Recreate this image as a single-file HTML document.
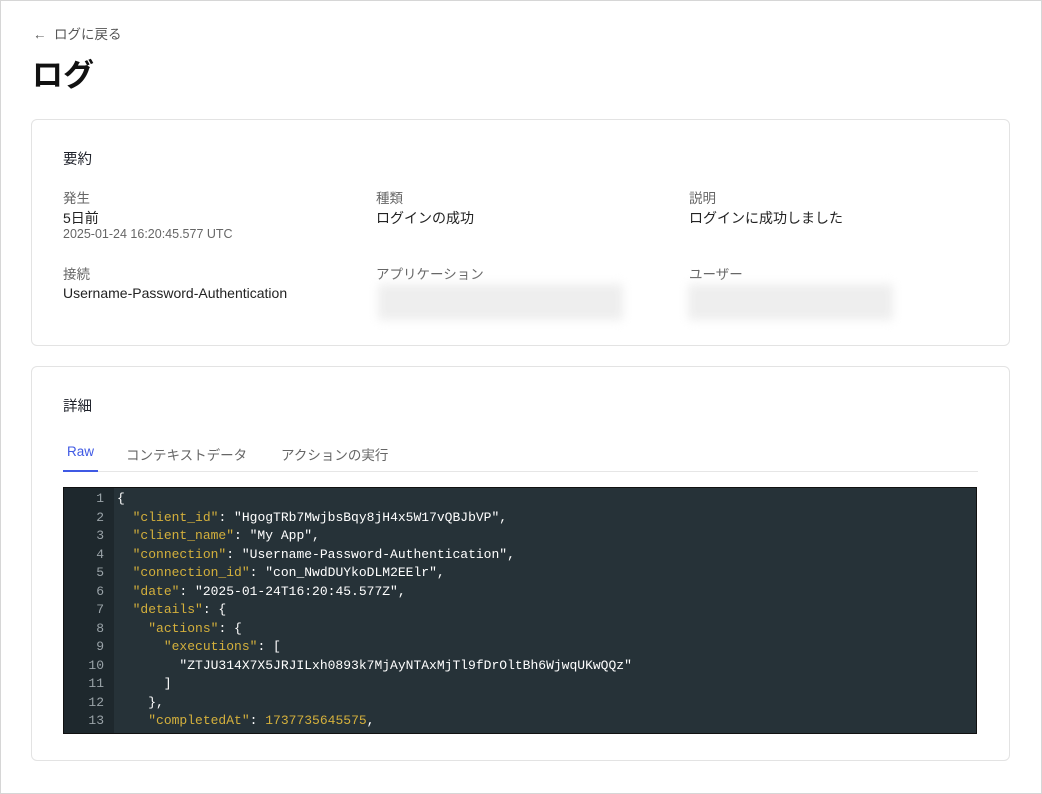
<!DOCTYPE html>
<html><head><meta charset="utf-8"><style>
body{margin:0;width:1042px;height:794px;background:#fff;font-family:"Liberation Sans","Noto Sans CJK JP",sans-serif;color:#1e212a;overflow:hidden;position:relative}
.frame{position:absolute;left:0;top:0;width:1040px;height:792px;border:1px solid #d6d6d6}
.back{position:absolute;left:33px;top:23px;font-size:13.5px;color:#555}
h1{position:absolute;left:32px;top:50px;margin:0;font-size:31px;font-weight:700;color:#111}
.card{position:absolute;left:31px;width:977px;border:1px solid #e3e3e3;border-radius:6px}
.t{position:absolute;font-size:14.5px}
.lab{position:absolute;font-size:13.5px;color:#666}
.val{position:absolute;font-size:14px;color:#222}
.blur{position:absolute;height:36px;background:#eee;filter:blur(5px)}
.code{position:absolute;left:63px;top:487px;width:912px;height:245px;background:#263238;border:1px solid #111;font-family:"Liberation Mono",monospace;font-size:13px;overflow:hidden}
.gut{position:absolute;left:0;top:0;width:50px;height:100%;background:#1e282d}
.ln{position:absolute;left:0;width:40px;text-align:right;color:#9aa3a8}
.tx{position:absolute;left:53px;white-space:pre;color:#fff}
.k{color:#d4b03c}
</style></head><body>
<div class="frame"></div>
<div class="back">←&nbsp;&nbsp;ログに戻る</div>
<h1>ログ</h1>
<div class="card" style="top:119px;height:225px"></div>
<div class="t" style="left:63px;top:148px">要約</div>
<div class="lab" style="left:63px;top:187px">発生</div>
<div class="val" style="left:63px;top:208px">5日前</div>
<div class="lab" style="left:63px;top:227px;font-size:12.5px">2025-01-24 16:20:45.577 UTC</div>
<div class="lab" style="left:376px;top:187px">種類</div>
<div class="val" style="left:376px;top:208px">ログインの成功</div>
<div class="lab" style="left:689px;top:187px">説明</div>
<div class="val" style="left:689px;top:208px">ログインに成功しました</div>
<div class="lab" style="left:63px;top:263px">接続</div>
<div class="val" style="left:63px;top:285px">Username-Password-Authentication</div>
<div class="lab" style="left:376px;top:263px">アプリケーション</div>
<div class="blur" style="left:378px;top:284px;width:245px"></div>
<div class="lab" style="left:689px;top:263px">ユーザー</div>
<div class="blur" style="left:688px;top:284px;width:205px"></div>
<div class="card" style="top:366px;height:393px"></div>
<div class="t" style="left:63px;top:395px">詳細</div>
<div style="position:absolute;left:63px;top:471px;width:915px;height:1px;background:#e6e6e6"></div>
<div class="t" style="left:67px;top:444px;font-size:13.5px;color:#3f59e4">Raw</div>
<div style="position:absolute;left:63px;top:470px;width:35px;height:2px;background:#3f59e4"></div>
<div class="t" style="left:126px;top:444px;font-size:13.5px;color:#666">コンテキストデータ</div>
<div class="t" style="left:281px;top:444px;font-size:13.5px;color:#666">アクションの実行</div>
<div class="code"><div class="gut"></div>
<div class="ln" style="top:3px">1</div><div class="tx" style="top:3px">{</div>
<div class="ln" style="top:21.5px">2</div><div class="tx" style="top:21.5px">  <span class="k">"client_id"</span>: "HgogTRb7MwjbsBqy8jH4x5W17vQBJbVP",</div>
<div class="ln" style="top:40px">3</div><div class="tx" style="top:40px">  <span class="k">"client_name"</span>: "My App",</div>
<div class="ln" style="top:58.5px">4</div><div class="tx" style="top:58.5px">  <span class="k">"connection"</span>: "Username-Password-Authentication",</div>
<div class="ln" style="top:77px">5</div><div class="tx" style="top:77px">  <span class="k">"connection_id"</span>: "con_NwdDUYkoDLM2EElr",</div>
<div class="ln" style="top:95.5px">6</div><div class="tx" style="top:95.5px">  <span class="k">"date"</span>: "2025-01-24T16:20:45.577Z",</div>
<div class="ln" style="top:114px">7</div><div class="tx" style="top:114px">  <span class="k">"details"</span>: {</div>
<div class="ln" style="top:132.5px">8</div><div class="tx" style="top:132.5px">    <span class="k">"actions"</span>: {</div>
<div class="ln" style="top:151px">9</div><div class="tx" style="top:151px">      <span class="k">"executions"</span>: [</div>
<div class="ln" style="top:169.5px">10</div><div class="tx" style="top:169.5px">        "ZTJU314X7X5JRJILxh0893k7MjAyNTAxMjTl9fDrOltBh6WjwqUKwQQz"</div>
<div class="ln" style="top:188px">11</div><div class="tx" style="top:188px">      ]</div>
<div class="ln" style="top:206.5px">12</div><div class="tx" style="top:206.5px">    },</div>
<div class="ln" style="top:225px">13</div><div class="tx" style="top:225px">    <span class="k">"completedAt"</span>: <span class="k">1737735645575</span>,</div>
</div>
</body></html>
